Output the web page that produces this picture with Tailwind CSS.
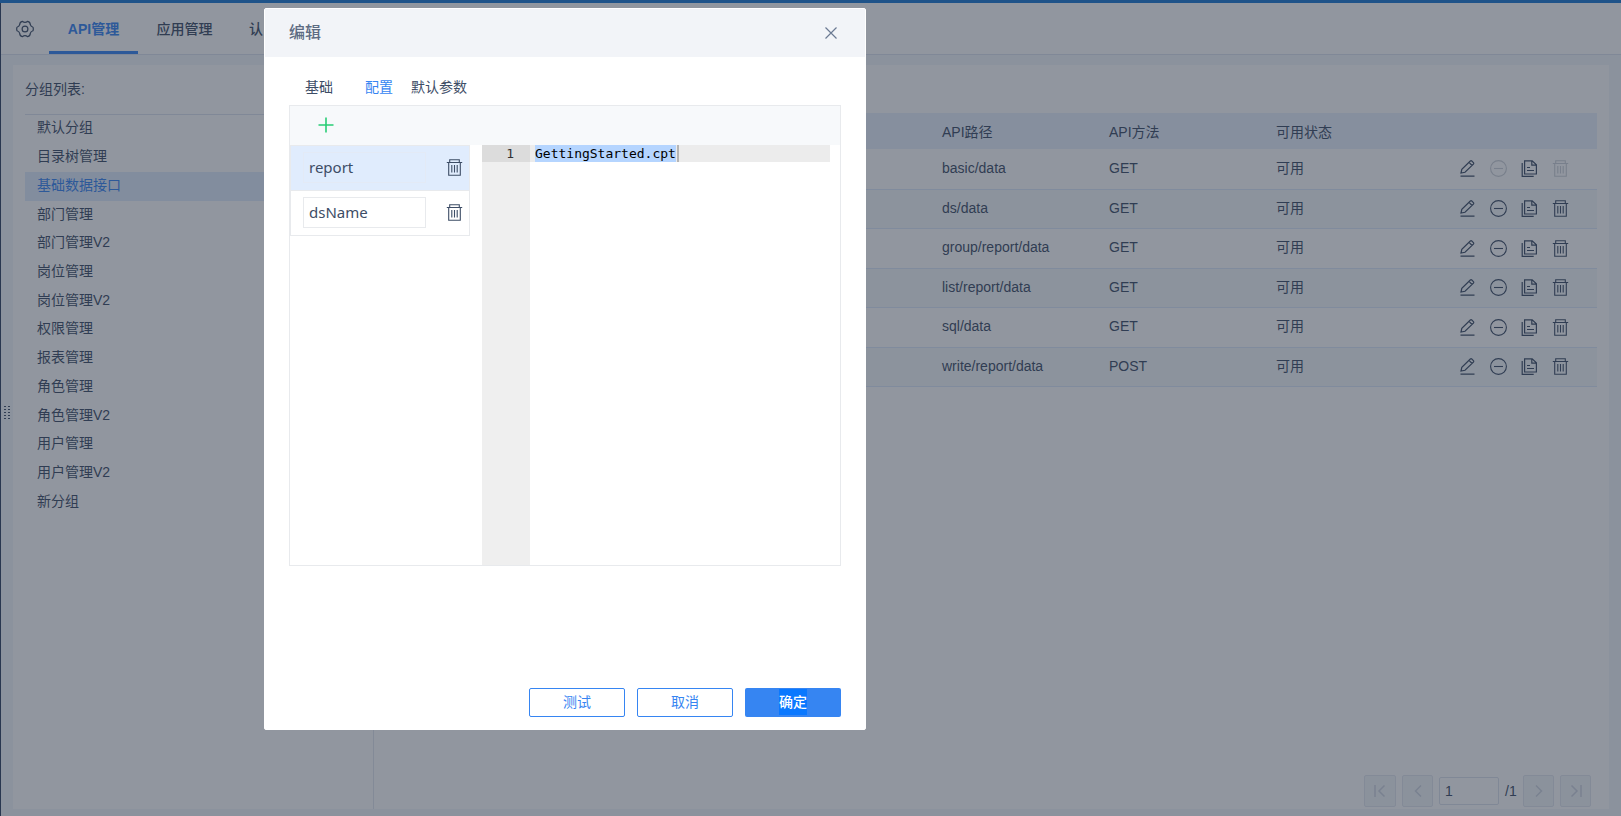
<!DOCTYPE html>
<html lang="zh-CN">
<head>
<meta charset="utf-8">
<title>API管理</title>
<script src="https://cdn.jsdelivr.net/npm/@tailwindcss/browser@4"></script>
</head>
<body class="relative h-screen overflow-hidden bg-[#f3f6fa] font-['Liberation_Sans','Noto_Sans_CJK_SC',sans-serif] text-sm text-[#3d4d66]">
<svg class="hidden">
  <symbol id="trash" viewBox="0 0 17 17" fill="none" stroke="currentColor" stroke-width="1.1"><path d="M.8 3.500h15.400M3.700 3.500V.7h9.600v2.800M2.700 3.500v12.700h11.600V3.500M5.800 6v7.500M8.500 6v7.500M11.200 6v7.500"/></symbol>
  <symbol id="pencil" viewBox="0 0 17 17" fill="none" stroke="currentColor" stroke-width="1.200"><path d="M1.500 16.200h14M2 13l.8-3.700L11.300 1q.8-.6 1.500 0l1.600 1.600q.7.700 0 1.500L6 12.300zM10 2.400l3.100 3.100"/></symbol>
  <symbol id="minus" viewBox="0 0 17 17" fill="none" stroke="currentColor" stroke-width="1.100"><circle cx="8.500" cy="8.500" r="7.900"/><path d="M4 8.500h9"/></symbol>
  <symbol id="copy" viewBox="0 0 17 17" fill="none" stroke="currentColor" stroke-width="1.200"><path d="M3.600.8h7.600l4.200 4V14H3.600zM10.800.8v4.400h4.600M1.200 3v13.300h11.500M6 7.500h3M6 10.500h7"/></symbol>
</svg>

<div class="flex h-full flex-col border-l border-[#2f4060]">
  <header class="flex h-[55px] shrink-0 border-b border-[#dde3ee] bg-white pt-[3px]">
    <button class="flex w-12 items-center justify-center" aria-label="设置">
      <svg class="size-[18px]" viewBox="0 0 18 18" fill="none" stroke="currentColor" stroke-width="1.200" stroke-linejoin="round"><path d="M6.300 1.300Q9 3.600 11.700 1.300 14.300 1.900 14.300 4.700 14.700 6.500 17 7.200 17.600 9 17 10.800 14.700 11.500 14.300 13.300 14.300 16.100 11.700 16.700 9 14.400 6.300 16.700 3.700 16.100 3.700 13.300 3.300 11.500 1 10.800.4 9 1 7.200 3.300 6.500 3.700 4.700 3.700 1.900 6.300 1.300Z"/><circle cx="9" cy="9" r="2.900"/></svg>
    </button>
    <nav class="flex">
      <a href="#" class="flex w-[89px] items-center justify-center border-b-3 border-[#3685f2] pt-[3px] font-bold text-[#3685f2]">API管理</a>
      <a href="#" class="flex w-[93px] items-center justify-center font-medium">应用管理</a>
      <a href="#" class="flex items-center px-[18px] font-medium">认</a>
    </nav>
  </header>

  <main class="mt-[10px] mr-3 mb-[7px] ml-3 flex min-h-0 flex-1 bg-white">
    <aside class="w-[361px] border-r border-[#e3e7ef] pl-3">
      <h2 class="flex h-[49px] items-center pb-[2px]">分组列表:</h2>
      <ul class="flex h-[403px] flex-col border-t border-[#dde3ee] [&>li]:flex [&>li]:flex-1 [&>li]:items-center [&>li]:pb-1 [&>li]:pl-3">
        <li>默认分组</li>
        <li>目录树管理</li>
        <li class="bg-[#e1ecfd] text-[#3685f2]">基础数据接口</li>
        <li>部门管理</li>
        <li>部门管理V2</li>
        <li>岗位管理</li>
        <li>岗位管理V2</li>
        <li>权限管理</li>
        <li>报表管理</li>
        <li>角色管理</li>
        <li>角色管理V2</li>
        <li>用户管理</li>
        <li>用户管理V2</li>
        <li>新分组</li>
      </ul>
    </aside>
    <section class="flex flex-1 flex-col pt-12 pr-3 pl-6">
      <table class="w-full table-fixed text-left">
        <colgroup><col><col class="w-[167px]"><col class="w-[167px]"><col class="w-[167px]"><col class="w-[154px]"></colgroup>
        <thead><tr class="h-9 bg-[#e9f1fd] [&>th]:pt-[2px] [&>th]:font-normal"><th></th><th>API路径</th><th>API方法</th><th>可用状态</th><th></th></tr></thead>
        <tbody id="rows" class="[&>tr]:border-b [&>tr]:border-[#dce9fb] [&>tr:nth-child(odd)]:h-10 [&>tr:nth-child(even)]:h-[39px] [&>tr:nth-child(even)]:bg-[#f5f9fb]"></tbody>
      </table>
      <div class="mt-auto mr-[6px] mb-[2px] flex items-center justify-end gap-[6px] text-[#cfd5e0]">
        <button disabled aria-label="首页" class="flex size-8 items-center justify-center rounded-xs border border-[#e3e7ef] bg-[#f3f6f9]"><svg class="size-3" viewBox="0 0 12 12" fill="none" stroke="currentColor" stroke-width="1.500"><path d="M1 0v12M10.500.5 5 6l5.500 5.500"/></svg></button>
        <button disabled aria-label="上一页" class="flex h-8 w-[31px] items-center justify-center rounded-xs border border-[#e3e7ef] bg-[#f3f6f9]"><svg class="size-3" viewBox="0 0 12 12" fill="none" stroke="currentColor" stroke-width="1.500"><path d="M9 .5 3.500 6 9 11.500"/></svg></button>
        <input aria-label="页码" value="1" class="h-7 w-[60px] rounded-xs border border-[#dde2ec] px-[5px] text-[#3d4d66]">
        <span class="w-[12px] text-[#3d4d66]">/1</span>
        <button disabled aria-label="下一页" class="flex h-8 w-[31px] items-center justify-center rounded-xs border border-[#e3e7ef] bg-[#f3f6f9]"><svg class="size-3" viewBox="0 0 12 12" fill="none" stroke="currentColor" stroke-width="1.500"><path d="m3 .5 5.500 5.500L3 11.500"/></svg></button>
        <button disabled aria-label="末页" class="flex h-8 w-[31px] items-center justify-center rounded-xs border border-[#e3e7ef] bg-[#f3f6f9]"><svg class="size-3" viewBox="0 0 12 12" fill="none" stroke="currentColor" stroke-width="1.500"><path d="M11 0v12M1.500.5 7 6l-5.500 5.500"/></svg></button>
      </div>
    </section>
  </main>
</div>

<!-- Resize grip of the left pane -->
<svg class="absolute top-[405px] left-[4px] h-4 w-[6px]" viewBox="0 0 6 16" fill="#3d4d66"><path d="M0 1h2v1H0zM4 1h2v1H4zM0 4h2v1H0zM4 4h2v1H4zM0 7h2v1H0zM4 7h2v1H4zM0 10h2v1H0zM4 10h2v1H4zM0 13h2v1H0zM4 13h2v1H4z"/></svg>

<div class="absolute inset-0 border-t-3 border-[#1f5389] bg-[#232e40]/50"></div>

<div role="dialog" aria-label="编辑" class="absolute top-2 left-[264px] flex h-[722px] w-[602px] flex-col rounded-xs border border-white bg-white">
  <header class="flex h-12 shrink-0 items-center justify-between bg-[#f2f4f8] pr-7 pl-6">
    <h1 class="text-base font-medium text-[#5d6b82]">编辑</h1>
    <button aria-label="关闭"><svg class="size-3" viewBox="0 0 12 12" fill="none" stroke="#6b7a92" stroke-width="1.200"><path d="m.5.500 11 11M11.500.5l-11 11"/></svg></button>
  </header>
  <div class="flex flex-1 flex-col px-6 pt-[13px] pb-3">
    <div role="tablist" class="flex h-[35px] items-center [&>button]:h-full [&>button]:w-[60px] [&>button]:pb-[2px]">
      <button role="tab">基础</button>
      <button role="tab" class="text-[#3685f2]" aria-selected="true">配置</button>
      <button role="tab">默认参数</button>
    </div>
    <div class="flex h-[461px] flex-col border border-[#e8eaed]">
      <div class="flex h-[39px] items-center bg-[#f7f9fb] pb-[2px] pl-7">
        <button aria-label="添加"><svg class="size-4" viewBox="0 0 16 16" stroke="#28cd75" stroke-width="1.600"><path d="M.5 8h15M8 .5v15"/></svg></button>
      </div>
      <div class="flex flex-1 font-['Noto_Sans',sans-serif] text-[15px]">
        <ul class="w-[180px] [&>li]:flex [&>li]:h-[46px] [&>li]:items-center [&>li]:border [&>li]:border-[#e8eaed] [&>li]:pb-[2px] [&>li]:pl-3">
          <li class="bg-[#e0ecfd]">
            <input aria-label="参数名" value="report" class="h-[31px] w-[123px] border border-[#e3eaf6] px-[5px]">
            <button class="ml-5" aria-label="删除"><svg class="size-[17px]"><use href="#trash"/></svg></button>
          </li>
          <li class="-mt-px">
            <input aria-label="参数名" value="dsName" class="h-[31px] w-[123px] border border-[#e8eaed] px-[5px]">
            <button class="ml-5" aria-label="删除"><svg class="size-[17px]"><use href="#trash"/></svg></button>
          </li>
        </ul>
        <div class="mr-[10px] ml-3 flex flex-1 font-['DejaVu_Sans_Mono',monospace] text-[13px] leading-[17px] text-black">
          <div class="w-12 bg-[#efefef] text-[#333]"><div class="bg-[#dcdcdc] pr-4 text-right">1</div></div>
          <div class="flex h-[17px] flex-1 bg-[#ececec] pl-[5px]"><span class="bg-[#b5d5ff]">GettingStarted.cpt</span><span class="ml-px w-[2px] bg-[#b5b5b5]"></span></div>
        </div>
      </div>
    </div>
    <footer class="mt-auto flex justify-end gap-3">
      <button class="h-[29px] w-24 rounded-xs border border-[#3685f2] pb-[2px] text-[#3685f2]">测试</button>
      <button class="h-[29px] w-24 rounded-xs border border-[#3685f2] pb-[2px] text-[#3685f2]">取消</button>
      <button class="flex h-[29px] w-24 items-center justify-center rounded-xs bg-[#3685f2] pb-[2px] font-medium text-white"><span class="bg-[#0a78ff] leading-[26px]">确定</span></button>
    </footer>
  </div>
</div>

<script>
const data = [['basic/data','GET'],['ds/data','GET'],['group/report/data','GET'],['list/report/data','GET'],['sql/data','GET'],['write/report/data','POST']];
const icon = (id, label, off) => `<button aria-label="${label}" ${off ? 'disabled class="opacity-25"' : ''}><svg class="size-[17px]"><use href="#${id}"/></svg></button>`;
document.getElementById('rows').innerHTML = data.map(([path, method], i) =>
  `<tr><td></td><td class="pb-[2px]">${path}</td><td class="pb-[2px]">${method}</td><td class="pb-[2px]">可用</td><td><div class="flex gap-[14px] pl-4">${icon('pencil','编辑')}${icon('minus','停用',!i)}${icon('copy','复制')}${icon('trash','删除',!i)}</div></td></tr>`).join('');
</script>
</body>
</html>
